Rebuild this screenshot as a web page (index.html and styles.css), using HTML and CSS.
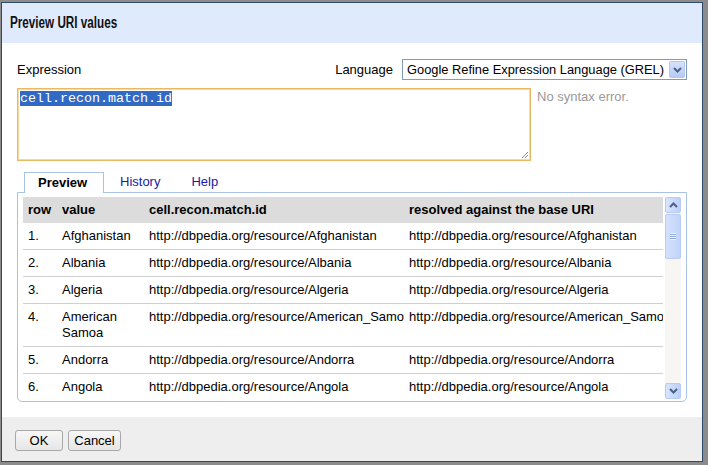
FILE: index.html
```html
<!DOCTYPE html>
<html>
<head>
<meta charset="utf-8">
<link rel="stylesheet" href="styles.css">
</head>
<body>
<div class="dialog">
  <div class="header"><span class="title">Preview URI values</span></div>
  <div class="body">
    <div class="top-row">
      <span class="label">Expression</span>
      <span class="spacer"></span>
      <span class="label">Language</span>
      <div class="select">
        <span class="select-text">Google Refine Expression Language (GREL)</span>
        <span class="select-btn">
          <svg width="9" height="6" viewBox="0 0 9 6"><path d="M1 1 L4.5 4.5 L8 1" fill="none" stroke="#4d6185" stroke-width="2"/></svg>
        </span>
      </div>
    </div>
    <div class="expr-row">
      <div class="textarea"><span class="sel">cell.recon.match.id</span>
        <svg class="grip" width="8" height="8" viewBox="0 0 8 8"><path d="M7 1 L1 7 M7 4 L4 7" stroke="#888" stroke-width="1"/></svg>
      </div>
      <div class="status">No syntax error.</div>
    </div>
    <div class="tabs">
      <div class="tab active">Preview</div>
      <div class="tab">History</div>
      <div class="tab">Help</div>
    </div>
    <div class="tab-panel">
      <div class="table-wrap">
        <table class="grid">
          <colgroup><col class="c1"><col class="c2"><col class="c3"><col class="c4"></colgroup>
          <thead>
            <tr><th>row</th><th>value</th><th>cell.recon.match.id</th><th>resolved against the base URI</th></tr>
          </thead>
          <tbody>
            <tr><td>1.</td><td>Afghanistan</td><td>http://dbpedia.org/resource/Afghanistan</td><td>http://dbpedia.org/resource/Afghanistan</td></tr>
            <tr><td>2.</td><td>Albania</td><td>http://dbpedia.org/resource/Albania</td><td>http://dbpedia.org/resource/Albania</td></tr>
            <tr><td>3.</td><td>Algeria</td><td>http://dbpedia.org/resource/Algeria</td><td>http://dbpedia.org/resource/Algeria</td></tr>
            <tr><td>4.</td><td class="wrap">American Samoa</td><td>http://dbpedia.org/resource/American_Samoa</td><td>http://dbpedia.org/resource/American_Samoa</td></tr>
            <tr><td>5.</td><td>Andorra</td><td>http://dbpedia.org/resource/Andorra</td><td>http://dbpedia.org/resource/Andorra</td></tr>
            <tr><td>6.</td><td>Angola</td><td>http://dbpedia.org/resource/Angola</td><td>http://dbpedia.org/resource/Angola</td></tr>
          </tbody>
        </table>
      </div>
      <div class="scrollbar">
        <div class="sb-btn">
          <svg width="9" height="6" viewBox="0 0 9 6"><path d="M1 5 L4.5 1.5 L8 5" fill="none" stroke="#4d6185" stroke-width="2"/></svg>
        </div>
        <div class="sb-thumb"><span class="grip-lines"></span></div>
        <div class="sb-track"></div>
        <div class="sb-btn">
          <svg width="9" height="6" viewBox="0 0 9 6"><path d="M1 1 L4.5 4.5 L8 1" fill="none" stroke="#4d6185" stroke-width="2"/></svg>
        </div>
      </div>
    </div>
  </div>
  <div class="footer">
    <button class="btn ok">OK</button>
    <button class="btn cancel">Cancel</button>
  </div>
</div>
</body>
</html>
```
FILE: styles.css
```css
html, body {
  margin: 0;
  padding: 0;
  background: #8c8c8c;
  width: 708px;
  height: 465px;
  overflow: hidden;
}
body {
  font-family: "Liberation Sans", Arial, sans-serif;
  font-size: 13px;
  color: #000;
}
.dialog {
  margin: 2px 0 0 1px;
  width: 700px;
  height: 458px;
  border: 1px solid #2e4a6b;
  background: #fff;
  display: flex;
  flex-direction: column;
}
.header {
  height: 40px;
  background: #dfeafc;
  padding-left: 8px;
  display: flex;
  align-items: center;
  box-sizing: border-box;
  padding-bottom: 1px;
}
.title {
  font-size: 16px;
  font-weight: bold;
  white-space: nowrap;
  display: inline-block;
  transform: scaleX(0.73);
  transform-origin: left center;
  color: #111;
}
.body {
  flex: 1;
  padding: 16px 15px 0 15px;
}
.top-row {
  display: flex;
  align-items: center;
  height: 21px;
}
.spacer { flex: 1; }
.label { line-height: 16px; }
.select {
  margin-left: 9px;
  width: 285px;
  height: 21px;
  box-sizing: border-box;
  border: 1px solid #7f9db9;
  display: flex;
  align-items: center;
  padding-left: 4px;
  padding-right: 1px;
}
.select-text {
  flex: 1;
  white-space: nowrap;
  overflow: hidden;
  font-size: 12.85px;
}
.select-btn {
  width: 16px;
  height: 17px;
  flex: none;
  background: linear-gradient(#d6e2fc, #b6caf6);
  border: 1px solid #b3c7f1;
  box-sizing: border-box;
  border-radius: 2px;
  display: flex;
  align-items: center;
  justify-content: center;
}
.expr-row {
  display: flex;
  margin-top: 8px;
}
.textarea {
  position: relative;
  width: 514px;
  height: 73px;
  box-sizing: border-box;
  border: 1px solid #e9b963;
  box-shadow: inset 0 0 0 1px #f6d89a;
  padding: 2px 2px;
  font-family: "Liberation Mono", "Courier New", monospace;
  font-size: 13.33px;
  line-height: 16px;
}
.sel {
  background: #316ac5;
  color: #fff;
}
.grip {
  position: absolute;
  right: 1px;
  bottom: 1px;
}
.status {
  margin-left: 6px;
  padding-top: 2px;
  color: #999;
  line-height: 14px;
}
.tabs {
  display: flex;
  margin-top: 10px;
  padding-left: 7px;
  height: 21px;
  align-items: flex-end;
}
.tab {
  height: 20px;
  line-height: 20px;
  color: #1a1aa6;
  padding: 0 15px 0 16px;
  box-sizing: border-box;
}
.tab.active {
  width: 80px;
  height: 21px;
  font-weight: bold;
  color: #000;
  background: #fff;
  border: 1px solid #a9c2e8;
  border-bottom: none;
  padding: 0 0 0 13px;
  line-height: 20px;
  position: relative;
  top: 1px;
}
.tab-panel {
  width: 670px;
  height: 210px;
  box-sizing: border-box;
  border: 1px solid #a9c2e8;
  border-radius: 0 0 5px 5px;
  padding: 4px 5px 0 5px;
  display: flex;
  gap: 2px;
  overflow: hidden;
}
.table-wrap {
  width: 640px;
  height: 202px;
  overflow: hidden;
}
.grid {
  width: 640px;
  table-layout: fixed;
  border-collapse: collapse;
}
.c1 { width: 34px; }
.c2 { width: 87px; }
.c3 { width: 260px; }
.c4 { width: 259px; }
.grid th, .grid td {
  text-align: left;
  padding: 5px 0 5px 5px;
  line-height: 16px;
  white-space: nowrap;
  overflow: hidden;
  vertical-align: top;
}
.grid th {
  background: #dcdcdc;
  font-weight: bold;
}
.grid td {
  border-bottom: 1px solid #cfcfcf;
}
.grid td.wrap { white-space: normal; }
.scrollbar {
  width: 16px;
  height: 202px;
  display: flex;
  flex-direction: column;
  background: #f7f6f2;
}
.sb-btn {
  height: 16px;
  box-sizing: border-box;
  border: 1px solid #b7cbf4;
  border-radius: 2px;
  background: linear-gradient(90deg, #d9e5fd, #bccff8);
  display: flex;
  align-items: center;
  justify-content: center;
}
.sb-thumb {
  height: 45px;
  margin-top: 1px;
  box-sizing: border-box;
  border: 1px solid #b7cbf4;
  border-radius: 2px;
  background: linear-gradient(90deg, #d4e1fc, #c2d4fa);
  display: flex;
  align-items: center;
  justify-content: center;
}
.grip-lines {
  width: 6px;
  height: 7px;
  background: repeating-linear-gradient(#eef3fe 0 1px, #8fa9e0 1px 2px);
}
.sb-track { flex: 1; }
.footer {
  height: 44px;
  background: #eeeeee;
  display: flex;
  align-items: flex-start;
  padding: 13px 0 0 13px;
  box-sizing: border-box;
  gap: 5px;
}
.btn {
  font-family: "Liberation Sans", Arial, sans-serif;
  font-size: 13px;
  height: 21px;
  border: 1px solid #a8a8a8;
  border-radius: 3px;
  background: linear-gradient(#f7f7f7, #e6e6e6);
  color: #000;
  padding: 0;
  margin: 0;
}
.ok { width: 48px; }
.cancel { width: 53px; }
```
